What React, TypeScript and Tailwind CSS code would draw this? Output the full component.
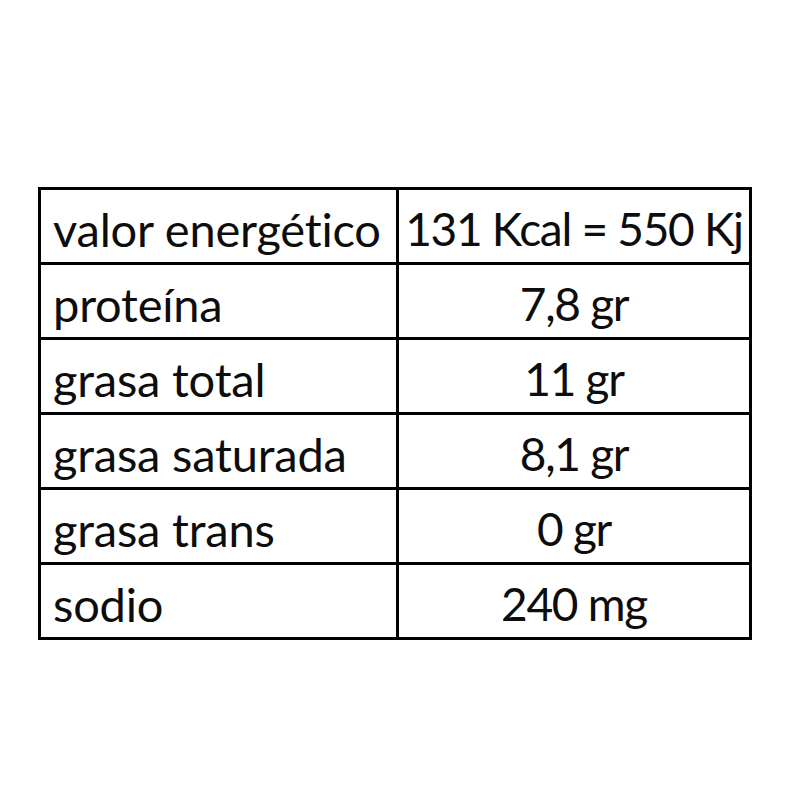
const rows: [string, string][] = [
  ["valor energético", "131 Kcal = 550 Kj"],
  ["proteína", "7,8 gr"],
  ["grasa total", "11 gr"],
  ["grasa saturada", "8,1 gr"],
  ["grasa trans", "0 gr"],
  ["sodio", "240 mg"],
];

export default function App() {
  return (
    <div className="h-[800px] w-[800px] bg-white pl-[38px] pt-[187px]">
      <table
        className="w-[714px] table-fixed border-collapse text-[#0d0d0d]"
        style={{ fontFamily: "Lato, 'Open Sans', sans-serif" }}
      >
        <tbody>
          {rows.map(([label, value]) => (
            <tr key={label} className="h-[75px]">
              <td className="w-[358px] border-[3px] border-black pl-[12px] pt-[6px] text-[47px] leading-none tracking-[-0.2px] whitespace-nowrap">
                {label}
              </td>
              <td className="border-[3px] border-black pt-[6px] text-center text-[46px] leading-none tracking-[-1.3px] whitespace-nowrap">
                {value}
              </td>
            </tr>
          ))}
        </tbody>
      </table>
    </div>
  );
}
